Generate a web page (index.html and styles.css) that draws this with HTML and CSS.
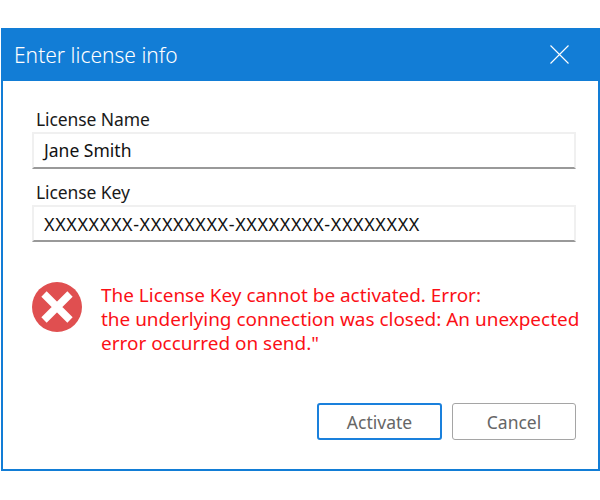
FILE: index.html
```html
<!DOCTYPE html>
<html lang="en">
<head>
    <meta charset="UTF-8">
    <meta name="viewport" content="width=device-width, initial-scale=1.0">
    <title>Enter license info</title>
    <link rel="stylesheet" href="styles.css">
</head>
<body>

    <div class="dialog">
        <!-- Title bar -->
        <div class="title-bar">
            <span class="title">Enter license info</span>
            <svg class="close-icon" width="19" height="19" viewBox="0 0 19 19">
                <path d="M0.5 0.5L18.5 18.5M18.5 0.5L0.5 18.5" stroke="#fff" stroke-width="1.1" fill="none"/>
            </svg>
        </div>

        <div class="content">
            <div class="field">
                <label class="field-label">License Name</label>
                <div class="input">Jane Smith</div>
            </div>
            <div class="field">
                <label class="field-label">License Key</label>
                <div class="input input-key">XXXXXXXX-XXXXXXXX-XXXXXXXX-XXXXXXXX</div>
            </div>

            <!-- Error message -->
            <div class="error">
                <svg class="error-icon" width="50" height="50" viewBox="0 0 50 50">
                    <circle cx="25" cy="25" r="25" fill="#e04f50"/>
                    <path d="M12 12L38 38M38 12L12 38" stroke="#fff" stroke-width="7.5" fill="none"/>
                </svg>
                <p class="error-text">The License Key cannot be activated. Error:<br>the underlying connection was closed: An unexpected error occurred on send."</p>
            </div>

            <div class="buttons">
                <button class="button button-primary">Activate</button>
                <button class="button">Cancel</button>
            </div>
        </div>
    </div>

</body>
</html>
```

FILE: styles.css
```css
body {
    font-family: "Noto Sans", "Open Sans", sans-serif;
    margin: 0;
    background: white;
}
.dialog {
    box-sizing: border-box;
    width: 599px;
    height: 443px;
    margin: 28px 0 0 1px;
    border: 2px solid #127dd6;
    border-top: none;
    display: flex;
    flex-direction: column;
}
.title-bar {
    height: 53px;
    flex-shrink: 0;
    margin: 0 -2px;
    padding: 0 31px 0 13px;
    background: #127dd6;
    color: white;
    display: flex;
    justify-content: space-between;
    align-items: center;
}
.title {
    font-size: 21px;
    font-weight: 300;
}
.content {
    flex: 1;
    padding: 24px 22px 29px 29px;
    display: flex;
    flex-direction: column;
}
.field {
    margin-bottom: 9px;
}
.field-label {
    display: block;
    height: 27px;
    padding-left: 4px;
    font-size: 17.5px;
    line-height: 29px;
    letter-spacing: -0.1px;
    color: #1a1a1a;
}
.input {
    box-sizing: border-box;
    height: 37px;
    padding-left: 10px;
    border: 2px solid #f0f0f0;
    border-bottom-color: #999;
    font-size: 17.5px;
    line-height: 33px;
    color: #111;
}
.input-key {
    font-size: 18px;
    line-height: 35px;
    letter-spacing: 0.6px;
}
.error {
    margin-top: 30px;
    margin-right: -5px;
    display: flex;
    gap: 19px;
}
.error-icon {
    flex-shrink: 0;
    margin-top: 1px;
}
.error-text {
    margin: 0;
    padding-top: 2px;
    font-size: 18.95px;
    line-height: 24px;
    color: #fb0f16;
}
.buttons {
    margin-top: auto;
    display: flex;
    justify-content: flex-end;
    gap: 10px;
}
.button {
    box-sizing: border-box;
    width: 124px;
    height: 37px;
    background: white;
    border: 1px solid #a5a5a5;
    border-radius: 3px;
    font-family: inherit;
    font-size: 17.5px;
    color: #666;
}
.button-primary {
    width: 125px;
    border: 2px solid #1a80dc;
}
```
